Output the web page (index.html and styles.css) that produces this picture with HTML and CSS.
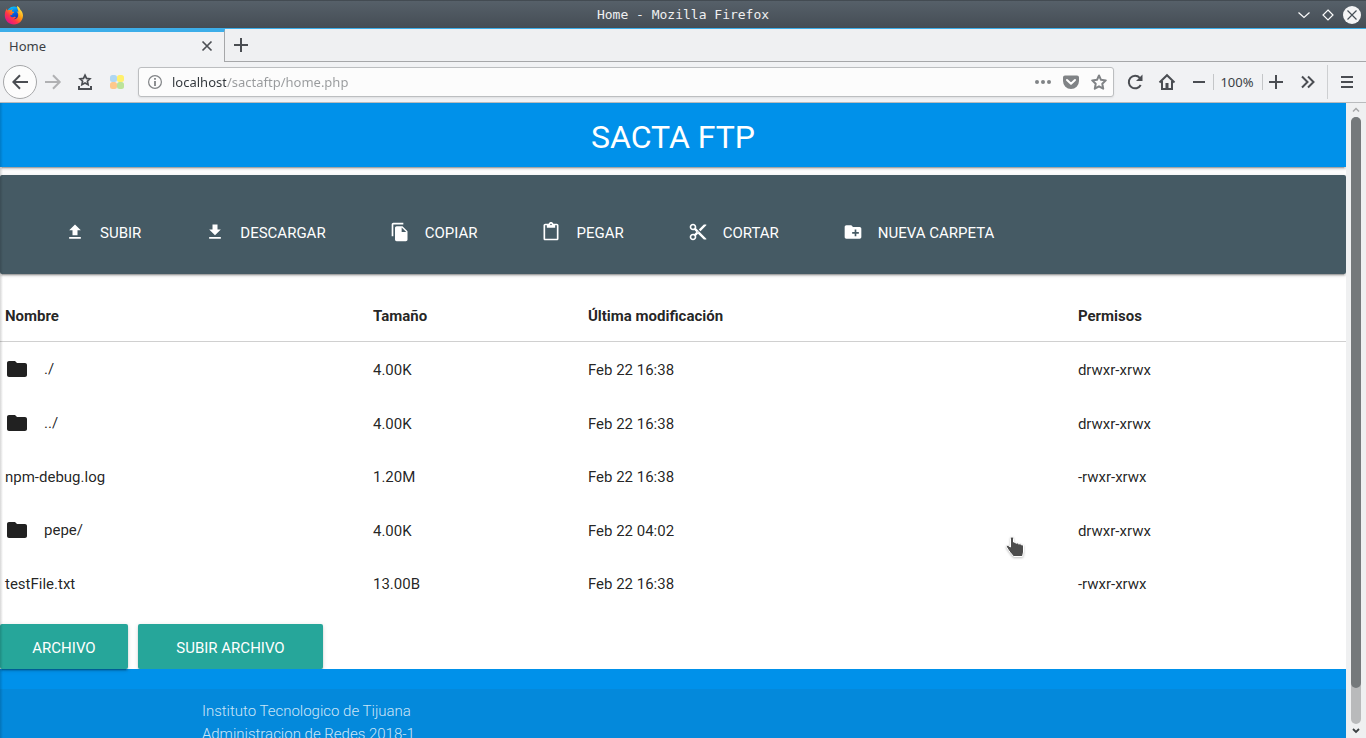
FILE: index.html
```html
<!DOCTYPE html>
<html lang="es">
<head>
<meta charset="utf-8">
<title>Home</title>
<link rel="stylesheet" href="styles.css">
</head>
<body>
<svg class="symbols" aria-hidden="true">
  <symbol id="folder" viewBox="0 0 24 24"><path d="M10 4H4c-1.1 0-1.99.9-1.99 2L2 18c0 1.1.9 2 2 2h16c1.1 0 2-.9 2-2V8c0-1.1-.9-2-2-2h-8l-2-2z"/></symbol>
</svg>

<div class="titlebar">
  <svg class="firefox" viewBox="0 0 20 20">
    <defs>
      <linearGradient id="flame" x1="0.9" y1="0.1" x2="0.2" y2="0.9"><stop offset="0" stop-color="#fff44f"/><stop offset="0.4" stop-color="#ff980e"/><stop offset="0.7" stop-color="#ff3647"/><stop offset="1" stop-color="#e31587"/></linearGradient>
      <linearGradient id="globe" x1="0.3" y1="0" x2="0.6" y2="1"><stop offset="0" stop-color="#0ec8ff"/><stop offset="0.5" stop-color="#0060df"/><stop offset="1" stop-color="#3b148c"/></linearGradient>
    </defs>
    <circle cx="10" cy="9" r="7.5" fill="url(#globe)"/>
    <path fill="url(#flame)" d="M13 1c2 1 3 2.500 3.500 4 .9.500 2.500 3 2.500 5.500 0 5-4 9-9 9s-9.200-4-9.200-9.300C.8 7.300 1.800 5 3 3.600c0 .9.200 1.500.6 2C4.500 5 6 5 6.800 5.300 7.400 4.500 8 4.200 8.800 4c-.8.800-1 1.800-.7 2.500.500.300 1.500.2 2 .4-.1.900-1 1.100-1.700 1.600-.3.600.2 1.100-.4 1.600-.9-.3-1.700 0-1.900.6.500 1.300 2.200 1.800 3.600 1.300 1.300-.5 2-.2 2.200.2-.8 1.600-2.300 2-3.300 2 3.500.8 5.600-1.500 5.600-4.200 0-1.500-.8-2.700-1.700-3.400.8-.2 1.300 0 1.800.4C14.500 5 13 3.500 13 1z"/>
  </svg>
  <span class="window-title">Home - Mozilla Firefox</span>
  <div class="window-buttons">
    <button aria-label="Minimizar"><svg viewBox="0 0 24 24"><path d="M6.500 9.500l5.500 5 5.500-5" fill="none" stroke="#fcfcfc" stroke-width="1.200"/></svg></button>
    <button aria-label="Maximizar"><svg viewBox="0 0 24 24"><path d="M12 7l5 5-5 5-5-5z" fill="none" stroke="#fcfcfc" stroke-width="1.200"/></svg></button>
    <button aria-label="Cerrar ventana"><svg viewBox="0 0 24 24"><circle cx="12" cy="12" r="9" fill="#f4f4f5"/><path d="M7.500 7.500l9 9m0-9l-9 9" stroke="#475057" stroke-width="1.200"/></svg></button>
  </div>
</div>

<div class="tabs">
  <div class="tab"><span>Home</span>
    <button class="tab-close" aria-label="Cerrar pestaña"><svg viewBox="0 0 16 16"><path d="M3.500 3.500l9 9m0-9l-9 9" stroke="#4d5055" stroke-width="1.700"/></svg></button>
  </div>
  <div class="tab-rest">
    <button class="tool" aria-label="Nueva pestaña"><svg viewBox="0 0 16 16"><path d="M8 1v14M1 8h14" stroke="#4a4d52" stroke-width="2"/></svg></button>
  </div>
</div>

<div class="nav">
  <button class="back" aria-label="Atrás"><svg viewBox="0 0 16 16"><path d="M16 8H1.500M8 1.200L1.300 8 8 14.800" fill="none" stroke="#4a4d52" stroke-width="2"/></svg></button>
  <button class="tool" aria-label="Adelante"><svg viewBox="0 0 16 16"><path d="M0 8h14.500M8 1.200L14.700 8 8 14.800" fill="none" stroke="#b0b1b3" stroke-width="2"/></svg></button>
  <button class="tool" aria-label="Marcadores"><svg viewBox="0 0 16 16"><path d="M8 1.200l1.500 3.200 3.400.4-2.500 2.400.7 3.500L8 9l-3.100 1.700.7-3.500-2.500-2.400 3.400-.4z" fill="none" stroke="#4a4d52" stroke-width="1.700"/><path d="M2 12v3h12v-3" fill="none" stroke="#4a4d52" stroke-width="2"/></svg></button>
  <button class="tool" aria-label="Extensión"><svg viewBox="0 0 16 16"><rect x="1" y="1" width="7" height="7" rx="2.500" fill="#afd7f2"/><rect x="8" y="1" width="7" height="7" rx="2.500" fill="#fff06c"/><rect x="1" y="8" width="7" height="7" rx="2.500" fill="#ffc88b"/><rect x="8" y="8" width="7" height="7" rx="2.500" fill="#bce39a"/></svg></button>
  <div class="urlbar">
    <svg class="info" viewBox="0 0 16 16"><circle cx="8" cy="8" r="6.400" fill="none" stroke="#808386" stroke-width="1.200"/><path d="M8 7v5M8 4v1.800" stroke="#808386" stroke-width="1.800"/></svg>
    <input class="address" type="text" aria-label="Dirección" value="localhost/sactaftp/home.php">
    <button class="url-action" aria-label="Acciones"><svg viewBox="0 0 16 16" fill="#808386"><circle cx="2" cy="8" r="2"/><circle cx="8" cy="8" r="2"/><circle cx="14" cy="8" r="2"/></svg></button>
    <button class="url-action" aria-label="Pocket"><svg viewBox="0 0 16 16"><path d="M2 1.500h12a2 2 0 0 1 2 2V7A8 8 0 0 1 0 7V3.500a2 2 0 0 1 2-2z" fill="#808386"/><path d="M4 6l4 3.800L12 6" fill="none" stroke="#fff" stroke-width="2" stroke-linecap="round" stroke-linejoin="round"/></svg></button>
    <button class="url-action" aria-label="Favorito"><svg viewBox="0 0 16 16"><path d="M8 1.500l2 4.300 4.800.6-3.500 3.400.9 4.900L8 12.300l-4.200 2.400.9-4.900L1.200 6.400 6 5.800z" fill="none" stroke="#808386" stroke-width="2" stroke-linejoin="round"/></svg></button>
  </div>
  <button class="tool" aria-label="Recargar"><svg viewBox="0 0 16 16"><path d="M13.700 11A6.300 6.300 0 1 1 12.800 3.800" fill="none" stroke="#4a4d52" stroke-width="2"/><path d="M15.500 0.500v6.500H9z" fill="#4a4d52"/></svg></button>
  <button class="tool" aria-label="Inicio"><svg viewBox="0 0 16 16"><path d="M.5 8.500L8 1.200l7.500 7.300" fill="none" stroke="#4a4d52" stroke-width="2"/><path d="M3 7v8h10V7" fill="none" stroke="#4a4d52" stroke-width="2"/><path d="M6.500 9h3v6h-3z" fill="#4a4d52"/></svg></button>
  <button class="tool zoom-step" aria-label="Reducir"><svg viewBox="0 0 16 16"><path d="M3 8h12" stroke="#4a4d52" stroke-width="2"/></svg></button>
  <button class="zoom-level">100%</button>
  <button class="tool zoom-step" aria-label="Ampliar"><svg viewBox="0 0 16 16"><path d="M6 1v14M-1 8h14" stroke="#4a4d52" stroke-width="2"/></svg></button>
  <button class="tool" aria-label="Más herramientas"><svg viewBox="0 0 16 16"><path d="M1 2.500L6.500 8 1 13.500M7 2.500L12.500 8 7 13.500" fill="none" stroke="#4a4d52" stroke-width="2"/></svg></button>
  <button class="menu" aria-label="Menú"><svg viewBox="0 0 16 16"><path d="M2 3h12M2 8h12M2 13h12" stroke="#4a4d52" stroke-width="2"/></svg></button>
</div>

<div class="viewport">
  <div class="page">
    <header class="brand"><a href="#">SACTA FTP</a></header>

    <nav class="actions">
      <a href="#"><svg viewBox="0 0 24 24"><path d="M9 16h6v-6h4l-7-7-7 7h4zm-4 2h14v2H5z"/></svg>SUBIR</a>
      <a href="#"><svg viewBox="0 0 24 24"><path d="M19 9h-4V3H9v6H5l7 7 7-7zM5 18v2h14v-2H5z"/></svg>DESCARGAR</a>
      <a href="#"><svg viewBox="0 0 24 24"><path d="M16 1H4c-1.100 0-2 .9-2 2v14h2V3h12V1zm-1 4l6 6v10c0 1.100-.9 2-2 2H7.990C6.890 23 6 22.100 6 21l.01-14c0-1.100.89-2 1.990-2h7zm-1 7h5.500L14 6.500V12z"/></svg>COPIAR</a>
      <a href="#"><svg viewBox="0 0 24 24"><path d="M19 2h-4.180C14.400.84 13.300 0 12 0c-1.300 0-2.400.84-2.820 2H5c-1.100 0-2 .9-2 2v16c0 1.100.9 2 2 2h14c1.100 0 2-.9 2-2V4c0-1.100-.9-2-2-2zm-7 0c.55 0 1 .45 1 1s-.45 1-1 1-1-.45-1-1 .45-1 1-1zm7 18H5V4h2v3h10V4h2v16z"/></svg>PEGAR</a>
      <a href="#"><svg viewBox="0 0 24 24"><path d="M9.640 7.640c.23-.5.360-1.050.360-1.640 0-2.210-1.790-4-4-4S2 3.790 2 6s1.790 4 4 4c.59 0 1.140-.13 1.640-.36L10 12l-2.360 2.360C7.140 14.130 6.590 14 6 14c-2.210 0-4 1.790-4 4s1.790 4 4 4 4-1.790 4-4c0-.59-.13-1.140-.36-1.640L12 14l7 7h3v-1L9.640 7.640zM6 8c-1.100 0-2-.89-2-2s.9-2 2-2 2 .89 2 2-.9 2-2 2zm0 12c-1.100 0-2-.89-2-2s.9-2 2-2 2 .89 2 2-.9 2-2 2zm6-7.500c-.28 0-.5-.22-.5-.5s.22-.5.5-.5.5.22.5.5-.22.5-.5.5zM19 3l-6 6 2 2 7-7V3z"/></svg>CORTAR</a>
      <a href="#"><svg viewBox="0 0 24 24"><path d="M20 6h-8l-2-2H4c-1.110 0-1.990.89-1.990 2L2 18c0 1.110.89 2 2 2h16c1.110 0 2-.89 2-2V8c0-1.110-.89-2-2-2zm-1 8h-3v3h-2v-3h-3v-2h3V9h2v3h3v2z"/></svg>NUEVA CARPETA</a>
    </nav>

    <table class="files">
      <colgroup><col class="col-name"><col class="col-size"><col class="col-date"><col></colgroup>
      <thead><tr><th>Nombre</th><th>Tamaño</th><th>Última modificación</th><th>Permisos</th></tr></thead>
      <tbody>
        <tr><td class="entry"><a class="dir" href="#"><svg><use href="#folder"/></svg>./</a></td><td>4.00K</td><td>Feb 22 16:38</td><td>drwxr-xrwx</td></tr>
        <tr><td class="entry"><a class="dir" href="#"><svg><use href="#folder"/></svg>../</a></td><td>4.00K</td><td>Feb 22 16:38</td><td>drwxr-xrwx</td></tr>
        <tr><td>npm-debug.log</td><td>1.20M</td><td>Feb 22 16:38</td><td>-rwxr-xrwx</td></tr>
        <tr><td class="entry"><a class="dir" href="#"><svg><use href="#folder"/></svg>pepe/</a></td><td>4.00K</td><td>Feb 22 04:02</td><td>drwxr-xrwx</td></tr>
        <tr><td>testFile.txt</td><td>13.00B</td><td>Feb 22 16:38</td><td>-rwxr-xrwx</td></tr>
      </tbody>
    </table>

    <div class="upload">
      <button class="btn btn-file">ARCHIVO</button>
      <button class="btn btn-send">SUBIR ARCHIVO</button>
    </div>

    <footer class="footer">
      <div class="copyright">
        <div class="container">Instituto Tecnologico de Tijuana<br>Administracion de Redes 2018-1</div>
      </div>
    </footer>
  </div>
  <div class="scrollbar">
    <svg class="scroll-arrow" viewBox="0 0 20 14"><path d="M7 8.500l3-3 3 3" fill="none" stroke="#a6a7a9" stroke-width="1.500"/></svg>
    <div class="track"><div class="thumb"></div></div>
    <svg class="scroll-arrow" viewBox="0 0 20 14"><path d="M7 5l3 3 3-3" fill="none" stroke="#3c4043" stroke-width="1.800"/></svg>
  </div>
</div>

<svg class="cursor" viewBox="0 0 20 22"><path d="M7 1c1 0 1.500.6 1.500 1.500V6l1.500.3 1 .9 1.600-.2 1 .9 1.700-.1 1 1 2.200.2V16l-1 4.500H8.500C7 18.500 4 15.500 1.500 11c-.6-1.200.6-2 1.800-1.400L5.500 11V2.500C5.500 1.600 6 1 7 1z" fill="#4d4d4d" stroke="#fff" stroke-width="1"/></svg>
</body>
</html>
```
FILE: styles.css
```css
* { box-sizing: border-box; }

body {
  margin: 0;
  height: 100vh;
  overflow: hidden;
  display: flex;
  flex-direction: column;
  background: #eff0f2;
  font-family: "Noto Sans", sans-serif;
  font-size: 13px;
  color: #3b3f44;
}

button {
  margin: 0;
  padding: 0;
  border: 0;
  background: none;
  font: inherit;
  color: inherit;
}

a { color: inherit; text-decoration: none; }
svg { display: block; }
.symbols { position: absolute; width: 0; height: 0; }

/* Window frame */
.titlebar {
  flex: none;
  display: grid;
  grid-template-columns: 1fr auto 1fr;
  align-items: center;
  height: 29px;
  background: linear-gradient(#566069, #454d55);
  border-top: 1px solid #434b52;
  border-bottom: 1px solid #3daee9;
  color: #eff0f1;
}
.firefox { width: 20px; height: 20px; margin-left: 4px; }
.window-title { font-family: "DejaVu Sans Mono", monospace; }
.window-buttons { display: flex; justify-content: flex-end; padding-right: 2px; }
.window-buttons svg { width: 24px; height: 24px; }

.tabs { flex: none; display: flex; height: 33px; }
.tab {
  display: flex;
  align-items: center;
  justify-content: space-between;
  width: 225px;
  padding: 0 9px 2px;
  background: #f1f2f4;
  border-top: 3px solid #3daee9;
  border-right: 1px solid #a6a7a9;
}
.tab-close svg { width: 16px; height: 16px; }
.tab-rest {
  flex: 1;
  display: flex;
  align-items: center;
  border-bottom: 1px solid #a6a7a9;
}

.nav {
  flex: none;
  display: flex;
  align-items: center;
  height: 41px;
  padding-left: 3px;
  background: #f1f2f4;
  border-bottom: 1px solid #b9bbbd;
}
.tool { display: grid; place-items: center; width: 32px; height: 32px; }
.tool svg, .menu svg { width: 16px; height: 16px; overflow: visible; }
.back {
  display: grid;
  place-items: center;
  width: 34px;
  height: 34px;
  border: 1px solid #a6a7a9;
  border-radius: 50%;
  background: #fcfcfc;
}
.back svg { width: 16px; height: 16px; }
.urlbar {
  flex: 1;
  display: flex;
  align-items: center;
  height: 30px;
  margin: 0 5px;
  padding: 0 0 0 8px;
  background: #fcfcfc;
  border: 1px solid #bcbec0;
  border-radius: 3px;
  box-shadow: 0 1px 2px rgba(0, 0, 0, 0.08);
}
.info { width: 16px; height: 16px; }
.address {
  flex: 1;
  min-width: 0;
  height: 26px;
  margin-left: 9px;
  padding: 0;
  border: 0;
  outline: 0;
  font: inherit;
  color: #989a9c;
  background: linear-gradient(90deg, #31363b 54px, #989a9c 54px);
  background-clip: text;
  -webkit-text-fill-color: transparent;
}
.url-action { display: grid; place-items: center; width: 28px; height: 28px; }
.url-action svg { width: 16px; height: 16px; }
.zoom-step { width: 30px; }
.zoom-level {
  width: 50px;
  height: 16px;
  padding-right: 2px;
  border-left: 1px solid #c4c6c8;
  border-right: 1px solid #c4c6c8;
  line-height: 16px;
}
.menu {
  display: grid;
  place-items: center;
  width: 39px;
  height: 34px;
  margin-left: 2px;
  border-left: 1px solid #cdcfd1;
}

/* Web page */
.viewport { flex: 1; min-height: 0; display: flex; }
.page {
  position: relative;
  flex: 1;
  overflow: hidden;
  background: #fff;
  font-family: Roboto, sans-serif;
  font-size: 15px;
  line-height: 23px;
  color: rgba(0, 0, 0, 0.87);
}
.page::after {
  content: "";
  position: absolute;
  inset: 0 auto 0 0;
  width: 3px;
  z-index: 2;
  background: linear-gradient(90deg, rgba(0, 0, 0, 0.16), transparent);
}
.brand {
  height: 64px;
  background: #0091ea;
  color: #fff;
  font-size: 32px;
  line-height: 68px;
  text-align: center;
  box-shadow: 0 2px 2px rgba(0, 0, 0, 0.14), 0 1px 5px rgba(0, 0, 0, 0.12), 0 3px 1px -2px rgba(0, 0, 0, 0.2);
}
.actions {
  display: flex;
  gap: 64px;
  margin: 8px 0 16px;
  padding: 47px 65px 29px;
  background: #455a64;
  border-radius: 2px;
  color: #fff;
  box-shadow: 0 2px 2px rgba(0, 0, 0, 0.14), 0 1px 5px rgba(0, 0, 0, 0.12), 0 3px 1px -2px rgba(0, 0, 0, 0.2);
}
.actions a { display: flex; align-items: flex-start; gap: 15px; }
.actions svg { width: 20px; height: 20px; fill: #fff; }

.files { width: 100%; table-layout: fixed; border-collapse: collapse; }
.col-name { width: 27.34%; }
.col-size { width: 15.97%; }
.col-date { width: 36.4%; }
.files th, .files td { padding: 16px 5px 14px; text-align: left; vertical-align: middle; }
.files th { padding: 15px 5px 13px; font-weight: 700; }
.files .entry { padding: 15px 5px; }
.files thead { border-bottom: 1px solid #d0d0d0; }
.dir { display: flex; align-items: center; gap: 15px; height: 24px; }
.dir svg { width: 24px; height: 24px; fill: #212121; }

.upload { display: flex; gap: 10px; margin-top: 14px; }
.btn {
  position: relative;
  height: 45px;
  padding-top: 3px;
  background: #26a69a;
  border-radius: 2px;
  color: #fff;
  box-shadow: 0 2px 2px rgba(0, 0, 0, 0.14), 0 1px 5px rgba(0, 0, 0, 0.12), 0 3px 1px -2px rgba(0, 0, 0, 0.2);
}
.btn-file { width: 128px; z-index: 1; }
.btn-send { width: 185px; }

.footer { position: relative; padding-top: 20px; background: #0091ea; }
.copyright {
  min-height: 50px;
  padding: 11px 0 10px;
  background: rgba(51, 51, 51, 0.08);
  color: rgba(255, 255, 255, 0.8);
  font-weight: 300;
}
.container { width: 70%; margin: 0 auto; }

.scrollbar { display: flex; flex-direction: column; width: 20px; background: #eff0f1; }
.scroll-arrow { flex: none; width: 20px; height: 14px; }
.track { flex: 1; margin: 0 5px; border-radius: 5px; background: #b9babb; }
.thumb { height: 94%; border-radius: 5px; background: #75797b; }

.cursor {
  position: absolute;
  left: 1005px;
  top: 536px;
  width: 20px;
  height: 22px;
  z-index: 3;
  filter: drop-shadow(0 1px 1px rgba(0, 0, 0, 0.25));
}
```
